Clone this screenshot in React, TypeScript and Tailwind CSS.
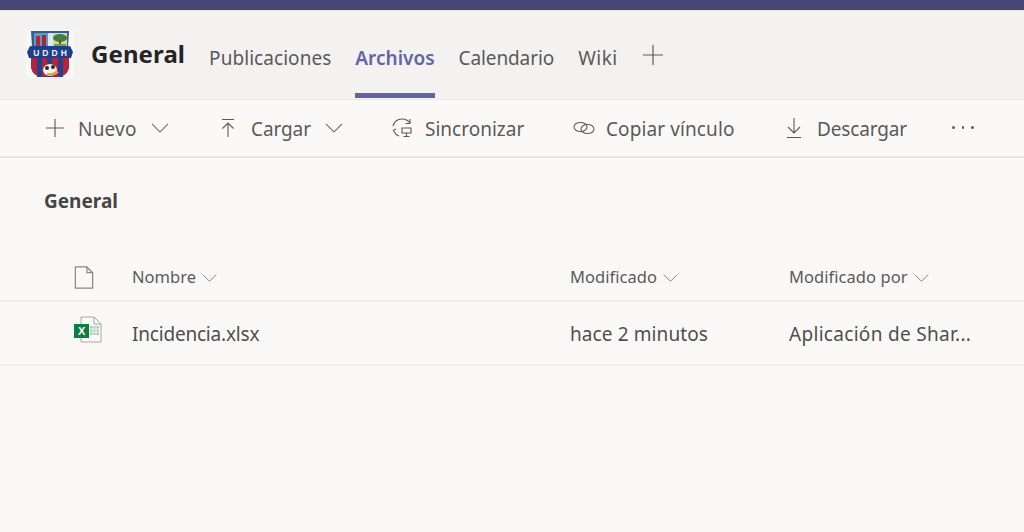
import React from "react";

const font = { fontFamily: '"Noto Sans", "Open Sans", sans-serif' };

function Stroke({ w = 20, h = 20, children }: { w?: number; h?: number; children: React.ReactNode }) {
  return (
    <svg width={w} height={h} viewBox={`0 0 ${w} ${h}`} fill="none" stroke="#5c5b5a" strokeWidth="1.1" className="shrink-0">
      {children}
    </svg>
  );
}

const Chevron = ({ w = 18 }: { w?: number }) => (
  <svg width={w} height={10} viewBox="0 0 18 10" fill="none" stroke="#7a7978" strokeWidth="1.1" className="shrink-0">
    <path d="M1 1 L9 9 L17 1" />
  </svg>
);

const Logo = () => (
  <svg width="48" height="48" viewBox="0 0 48 48" className="shrink-0">
    <rect x="0" y="0" width="48" height="48" fill="#f7f7f6" />
    <path d="M5 1 H43 L42 17 H6 Z" fill="#2f5f96" />
    <rect x="8" y="3" width="14" height="14" fill="#5d9cc0" />
    <rect x="22" y="3" width="5" height="14" fill="#dde8ec" />
    <rect x="27" y="3" width="14" height="14" fill="#e3d48a" />
    <rect x="10" y="6" width="4" height="11" fill="#b22a3a" />
    <rect x="16" y="5" width="4" height="12" fill="#a3263a" />
    <ellipse cx="34" cy="8" rx="7" ry="4" fill="#3d7f45" />
    <rect x="33" y="10" width="2" height="5" fill="#5b5a36" />
    <rect x="28" y="14" width="12" height="2" fill="#7f9a45" />
    <path d="M3 18 Q3 16 6 16 H42 Q45 16 45 18 L47 22 L45 28 H3 L1 22 Z" fill="#1f3f8c" />
    <text x="25.5" y="25.5" textAnchor="middle" fill="#eef0f6" fontSize="8.5" fontWeight="700" letterSpacing="3" fontFamily="Liberation Sans, sans-serif">UDDH</text>
    <path d="M5 28 H43 L43 38 Q41 46 33 47 H15 Q7 46 5 38 Z" fill="#b3243c" />
    <rect x="11" y="28" width="5" height="19" fill="#25408f" />
    <rect x="21" y="28" width="5" height="19" fill="#25408f" />
    <rect x="32" y="28" width="5" height="19" fill="#25408f" />
    <ellipse cx="24" cy="40" rx="7" ry="6" fill="#f4f1ea" />
    <circle cx="21" cy="38" r="2" fill="#2b2b2b" />
    <circle cx="27" cy="37" r="2" fill="#2b2b2b" />
    <path d="M21 45 Q29 47 33 42 L30 41 Q26 44 21 43 Z" fill="#d9a441" />
  </svg>
);

const Tab = ({ label, active, track }: { label: string; active?: boolean; track?: string }) => (
  <div className="flex h-full flex-col items-stretch">
    <div className={`flex flex-1 items-center pt-[13px] text-[19px] ${active ? "font-semibold text-[#6264a7]" : "text-[#5a5958]"} ${track}`}>
      {label}
    </div>
    <div className={`mb-[1px] h-[5px] ${active ? "bg-[#6264a7]" : ""}`} />
  </div>
);

const Tool = ({ icon, label, chevron, className, track }: { icon: React.ReactNode; label: string; chevron?: boolean; className: string; track: string }) => (
  <div className={`flex items-center ${className}`}>
    {icon}
    <span className={`pt-[2px] text-[19px] text-[#5a5958] ${track}`}>{label}</span>
    {chevron && <span className="ml-[14px] flex"><Chevron /></span>}
  </div>
);

export default function App() {
  return (
    <div style={font} className="flex h-[532px] w-[1024px] flex-col overflow-hidden bg-[#faf9f8]">
      <div className="h-[10px] bg-[#464775]" />
      <div className="flex h-[89px] items-stretch border-t border-[#e8e7e6] bg-[#f3f2f1] pl-[26px]">
        <div className="flex items-center pb-[2px]"><Logo /></div>
        <div className="ml-[17px] flex items-center pb-[3px] text-[24px] font-bold tracking-[0.1px] text-[#252423]">General</div>
        <div className="ml-[24px] flex items-stretch gap-[24px]">
          <Tab label="Publicaciones" track="tracking-[0.05px]" />
          <Tab label="Archivos" active track="tracking-[0px]" />
          <Tab label="Calendario" track="tracking-[-0.1px]" />
          <Tab label="Wiki" track="tracking-[0.5px]" />
        </div>
        <div className="ml-[24px] flex items-center pb-[1px]">
          <svg width="22" height="22" viewBox="0 0 22 22" fill="none" stroke="#5c5b5a" strokeWidth="1.2"><path d="M11 1 V21 M1 11 H21" /></svg>
        </div>
      </div>

      <div className="flex h-[59px] items-center border-y border-t-[#ebeaea] border-b-2 border-b-[#e6e5e4] pl-[45px]">
        <Tool className="w-[173px]" track="tracking-[0.2px]" label="Nuevo" chevron icon={<span className="mr-[13px] flex"><Stroke><path d="M10 1 V19 M1 10 H19" /></Stroke></span>} />
        <Tool className="w-[173px]" track="tracking-[-0.1px]" label="Cargar" chevron icon={<span className="mr-[13px] flex"><Stroke w={20}><path d="M4 1.5 H16 M10 19 V5 M4.5 10.5 L10 5 L15.5 10.5" /></Stroke></span>} />
        <Tool className="w-[182px]" track="tracking-[0px]" label="Sincronizar" icon={<span className="mr-[11px] flex"><Stroke w={23} h={22}><path d="M2 9 Q4 2 11 2 Q16 2 19 6 M19 2 V6.5 H14.5 M2 13 L4 16 Q5 18 8 19 M2 13.5 L5 12 M11 11 H20 V16 H11 Z M15.5 16 V19 M12.5 19.5 H18.5" /></Stroke></span>} />
        <Tool className="w-[212px]" track="tracking-[0.1px]" label="Copiar vínculo" icon={<span className="mr-[11px] flex"><Stroke w={22} h={16}><ellipse cx="7.5" cy="7" rx="6.5" ry="4.5" /><ellipse cx="14.5" cy="9" rx="6.5" ry="4.5" /></Stroke></span>} />
        <Tool className="w-[167px]" track="tracking-[-0.15px]" label="Descargar" icon={<span className="mr-[14px] flex"><Stroke w={18} h={22}><path d="M9 1 V16 M3 10 L9 16 L15 10 M2 20.5 H16" /></Stroke></span>} />
        <div className="flex gap-[7px] pb-[1px]">
          <span className="h-[2.5px] w-[2.5px] rounded-full bg-[#5c5b5a]" />
          <span className="h-[2.5px] w-[2.5px] rounded-full bg-[#5c5b5a]" />
          <span className="h-[2.5px] w-[2.5px] rounded-full bg-[#5c5b5a]" />
        </div>
      </div>

      <div className="pl-[44px] pt-[30px] text-[19px] font-bold leading-[26px] text-[#484644]">General</div>

      <div className="mt-[44px] flex h-[44px] items-center border-b-2 border-[#eeedec] pb-[3px] text-[16.5px] tracking-[0.05px] text-[#5a5958]">
        <div className="w-[132px] pl-[74px]">
          <svg width="20" height="23" viewBox="0 0 20 24" fill="none" stroke="#8a8886" strokeWidth="1.3"><path d="M1 1 H13 L19 7 V23 H1 Z M13 1 V7 H19" /></svg>
        </div>
        <div className="flex w-[438px] items-center gap-[6px]">Nombre <Chevron w={15} /></div>
        <div className="flex w-[219px] items-center gap-[6px]">Modificado <Chevron w={15} /></div>
        <div className="flex items-center gap-[6px]">Modificado por <Chevron w={15} /></div>
      </div>

      <div className="flex h-[64px] items-center border-b-2 border-[#f1f0ef] pt-[2px] text-[19px] tracking-[-0.2px] text-[#4f4e4d]">
        <div className="w-[132px] pb-[8px] pl-[74px]">
          <svg width="28" height="28" viewBox="0 0 28 28">
            <path d="M7 1 H20 L27 8 V26 H7 Z" fill="#fbfbfa" stroke="#a8a6a4" strokeWidth="1" />
            <path d="M20 1 V8 H27" fill="none" stroke="#a8a6a4" strokeWidth="1" />
            <rect x="16" y="10" width="9" height="9" fill="#a9cdb8" />
            <path d="M19 10 V19 M22 10 V19 M16 13 H25 M16 16 H25" stroke="#fbfbfa" strokeWidth="0.8" />
            <rect x="0" y="8" width="15" height="14" fill="#107c41" />
            <text x="7.5" y="19" textAnchor="middle" fill="#fff" fontSize="11" fontWeight="700" fontFamily="Liberation Sans, sans-serif">X</text>
          </svg>
        </div>
        <div className="w-[438px]">Incidencia.xlsx</div>
        <div className="w-[219px] tracking-[0.1px]">hace 2 minutos</div>
        <div className="tracking-[0.3px]">Aplicación de Shar...</div>
      </div>
    </div>
  );
}
